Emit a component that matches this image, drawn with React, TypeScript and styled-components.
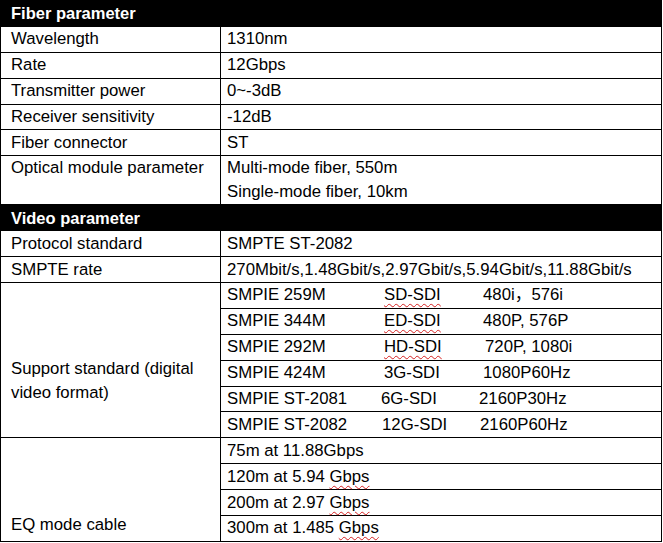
import React from 'react';
import styled, { createGlobalStyle } from 'styled-components';

const GlobalStyle = createGlobalStyle`
  body {
    margin: 0;
    background: #fff;
  }
`;

const TEXT_X = 227;

const support = [
  { code: 'SMPIE 259M', sdi: 'SD-SDI', fmt: '480i，576i', sdiX: 384, fmtX: 483, wavy: true },
  { code: 'SMPIE 344M', sdi: 'ED-SDI', fmt: '480P, 576P', sdiX: 384, fmtX: 483, wavy: true },
  { code: 'SMPIE 292M', sdi: 'HD-SDI', fmt: '720P, 1080i', sdiX: 384, fmtX: 485, wavy: true },
  { code: 'SMPIE 424M', sdi: '3G-SDI', fmt: '1080P60Hz', sdiX: 384, fmtX: 483, wavy: false },
  { code: 'SMPIE ST-2081', sdi: '6G-SDI', fmt: '2160P30Hz', sdiX: 381, fmtX: 479, wavy: false },
  { code: 'SMPIE ST-2082', sdi: '12G-SDI', fmt: '2160P60Hz', sdiX: 382, fmtX: 480, wavy: false },
];

const eq = [
  { lead: '75m at 11.88', unit: 'Gbps', wavy: false },
  { lead: '120m at 5.94 ', unit: 'Gbps', wavy: true },
  { lead: '200m at 2.97 ', unit: 'Gbps', wavy: true },
  { lead: '300m at 1.485 ', unit: 'Gbps', wavy: true },
];

const basic = [
  ['Wavelength', '1310nm'],
  ['Rate', '12Gbps'],
  ['Transmitter power', '0~-3dB'],
  ['Receiver sensitivity', '-12dB'],
  ['Fiber connector', 'ST'],
];

export default function App() {
  return (
    <>
      <GlobalStyle />
      <Sheet>
        <colgroup>
          <col style={{ width: 220 }} />
          <col />
        </colgroup>
        <tbody>
          <tr>
            <SectionCell colSpan={2}>Fiber parameter</SectionCell>
          </tr>
          {basic.map(([k, v]) => (
            <tr key={k}>
              <NameCell>{k}</NameCell>
              <ValueCell>{v}</ValueCell>
            </tr>
          ))}
          <tr>
            <NameCell $align="top">Optical module parameter</NameCell>
            <ValueCell $align="top">
              Multi-mode fiber, 550m
              <br />
              Single-mode fiber, 10km
            </ValueCell>
          </tr>
          <tr>
            <SectionCell colSpan={2}>Video parameter</SectionCell>
          </tr>
          <tr>
            <NameCell>Protocol standard</NameCell>
            <ValueCell>SMPTE ST-2082</ValueCell>
          </tr>
          <tr>
            <NameCell>SMPTE rate</NameCell>
            <ValueCell>270Mbit/s,1.48Gbit/s,2.97Gbit/s,5.94Gbit/s,11.88Gbit/s</ValueCell>
          </tr>
          {support.map((s, i) => (
            <tr key={s.code}>
              {i === 0 && (
                <NameCell rowSpan={support.length} $align="top" $padTop={74}>
                  Support standard (digital video format)
                </NameCell>
              )}
              <ValueCell>
                <Field $w={s.sdiX - TEXT_X}>{s.code}</Field>
                <Field $w={s.fmtX - s.sdiX}>
                  <Squiggle $on={s.wavy}>{s.sdi}</Squiggle>
                </Field>
                <Field>{s.fmt}</Field>
              </ValueCell>
            </tr>
          ))}
          {eq.map((e, i) => (
            <tr key={e.lead}>
              {i === 0 && (
                <NameCell rowSpan={eq.length} $align="bottom" $padBottom={4}>
                  EQ mode cable
                </NameCell>
              )}
              <ValueCell>
                {e.lead}
                <Squiggle $on={e.wavy}>{e.unit}</Squiggle>
              </ValueCell>
            </tr>
          ))}
        </tbody>
      </Sheet>
    </>
  );
}

const Sheet = styled.table`
  width: 662px;
  table-layout: fixed;
  border-collapse: collapse;
  font-family: 'Liberation Sans', Arial, 'Noto Sans CJK SC', sans-serif;
  font-size: 16.75px;
  color: #000;
`;

const BaseCell = styled.td<{ $align?: string; $padTop?: number; $padBottom?: number }>`
  border: 1px solid #000;
  height: 24.9px;
  line-height: 24px;
  vertical-align: ${(p) => p.$align || 'middle'};
  padding-top: ${(p) => p.$padTop ?? 0}px;
  padding-bottom: ${(p) => p.$padBottom ?? 0}px;
  white-space: normal;
`;

const NameCell = styled(BaseCell)`
  padding-left: 10px;
  padding-right: 4px;
`;

const ValueCell = styled(BaseCell)`
  padding-left: 6px;
  padding-right: 2px;
  white-space: nowrap;
`;

const SectionCell = styled.td`
  border: 1px solid #000;
  background: #000;
  color: #fff;
  font-weight: bold;
  font-size: 16.5px;
  height: 24.9px;
  line-height: 24px;
  padding: 0 10px;
`;

const Field = styled.span<{ $w?: number }>`
  display: inline-block;
  width: ${(p) => (p.$w ? `${p.$w}px` : 'auto')};
`;

const Squiggle = styled.span<{ $on: boolean }>`
  text-decoration: ${(p) => (p.$on ? 'underline wavy #d42020' : 'none')};
  text-decoration-thickness: 1px;
  text-underline-offset: 3px;
`;
